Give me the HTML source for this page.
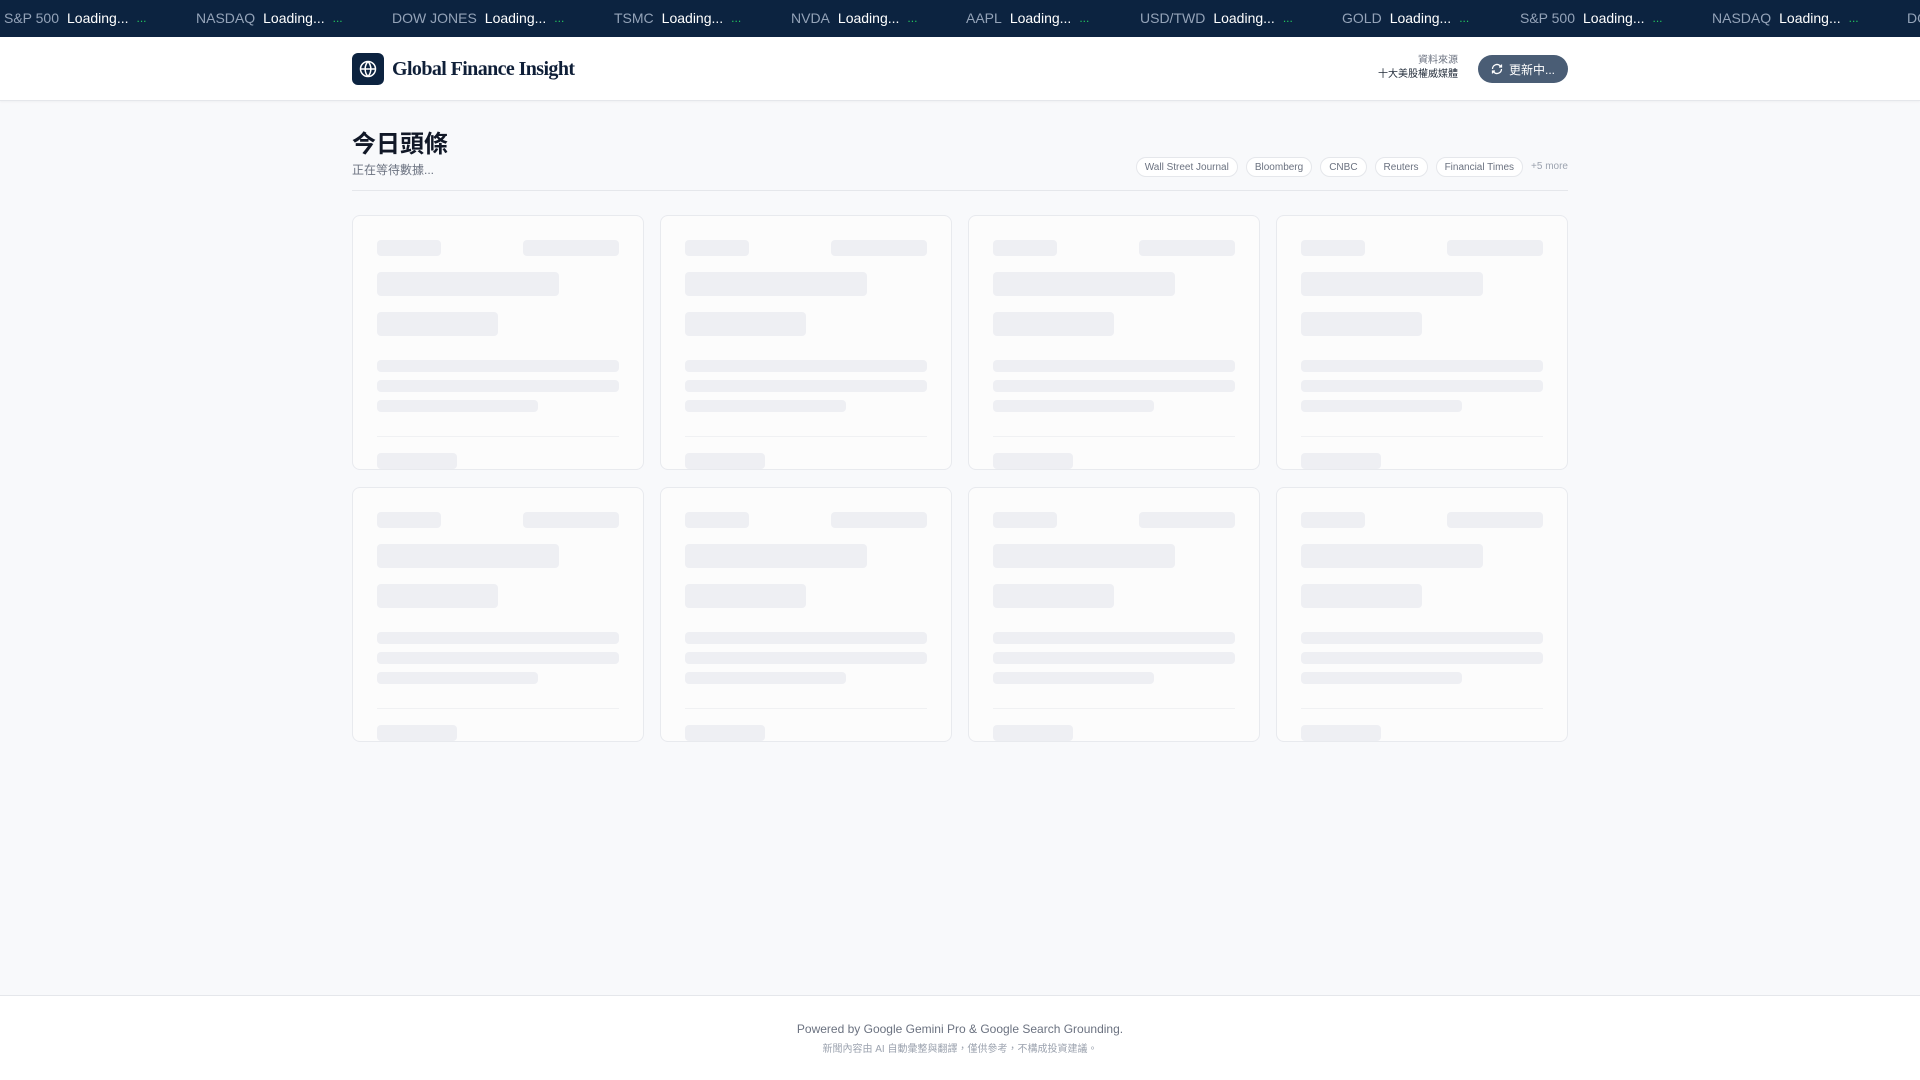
<!DOCTYPE html>
<html><head><meta charset="utf-8"><style>
*{box-sizing:border-box;margin:0;padding:0}
body{width:1920px;height:1080px;overflow:hidden;background:#f8f9fb;font-family:"Liberation Sans","Noto Sans CJK TC",sans-serif;position:relative}
.ticker{position:absolute;left:0;top:0;width:1920px;height:37px;background:#0c2340}
.ti{position:absolute;top:-1px;height:37px;display:flex;align-items:center;white-space:nowrap;font-size:14px}
.ti .l{color:#94a3b8;margin-right:8px}
.ti .v{color:#fff;margin-right:8px}
.ti .d{color:#22c55e;font-size:12px}
.header{position:absolute;left:0;top:37px;width:1920px;height:64px;background:#fff;border-bottom:1px solid #e5e7eb;box-shadow:0 1px 2px rgba(0,0,0,.04)}
.logo{position:absolute;left:352px;top:16px;width:32px;height:32px;background:#0c2340;border-radius:6px;display:flex;align-items:center;justify-content:center}
.title{position:absolute;left:392px;top:21px;font-family:"Liberation Serif",serif;font-weight:bold;font-size:20px;color:#0f1f38;letter-spacing:-0.6px}
.src{position:absolute;right:462px;top:17px;text-align:right;font-size:10px;line-height:14px}
.btn{position:absolute;left:1478px;top:18px;width:90px;height:28px;border-radius:14px;background:#4a5d75;color:#fff;font-size:12px;display:flex;align-items:center;justify-content:center;gap:6px}
h1{position:absolute;left:352px;top:124px;font-size:24px;font-weight:bold;color:#111827}
.sub{position:absolute;left:352px;top:161px;font-size:12px;color:#6b7280}
.chips{position:absolute;right:352px;top:157px;display:flex;gap:8px;align-items:center}
.chip{height:20px;padding:0 8px;border:1px solid #e5e7eb;border-radius:10px;background:#fff;font-size:10px;color:#6b7280;display:flex;align-items:center}
.more{font-size:10px;color:#9ca3af;margin-top:-2px}
.divider{position:absolute;left:352px;top:190px;width:1216px;height:1px;background:#e5e7eb}
.card{position:absolute;width:292px;height:255px;background:#fcfcfc;border:1px solid #e8eaee;border-radius:8px;overflow:hidden}
.s{position:absolute;background:#eeeff3;border-radius:4px}
.hr{position:absolute;left:24px;right:24px;top:220px;height:1px;background:#f0f1f3}
.footer{position:absolute;left:0;top:995px;width:1920px;height:85px;background:#fff;border-top:1px solid #e5e7eb;text-align:center}
</style></head><body>
<div class="ticker">
<div class="ti" style="left:4px"><span class="l">S&amp;P 500</span><span class="v">Loading...</span><span class="d">...</span></div>
<div class="ti" style="left:196px"><span class="l">NASDAQ</span><span class="v">Loading...</span><span class="d">...</span></div>
<div class="ti" style="left:392px"><span class="l">DOW JONES</span><span class="v">Loading...</span><span class="d">...</span></div>
<div class="ti" style="left:614px"><span class="l">TSMC</span><span class="v">Loading...</span><span class="d">...</span></div>
<div class="ti" style="left:791px"><span class="l">NVDA</span><span class="v">Loading...</span><span class="d">...</span></div>
<div class="ti" style="left:966px"><span class="l">AAPL</span><span class="v">Loading...</span><span class="d">...</span></div>
<div class="ti" style="left:1140px"><span class="l">USD/TWD</span><span class="v">Loading...</span><span class="d">...</span></div>
<div class="ti" style="left:1342px"><span class="l">GOLD</span><span class="v">Loading...</span><span class="d">...</span></div>
<div class="ti" style="left:1520px"><span class="l">S&amp;P 500</span><span class="v">Loading...</span><span class="d">...</span></div>
<div class="ti" style="left:1712px"><span class="l">NASDAQ</span><span class="v">Loading...</span><span class="d">...</span></div>
<div class="ti" style="left:1907px"><span class="l">DOW JONES</span></div>
</div>
<div class="header">
<div class="logo"><svg width="18" height="18" viewBox="0 0 24 24" fill="none" stroke="#fff" stroke-width="2"><circle cx="12" cy="12" r="10"/><path d="M2 12h20M12 2a15 15 0 0 1 0 20M12 2a15 15 0 0 0 0 20"/></svg></div>
<div class="title">Global Finance Insight</div>
<div class="src"><div style="color:#6b7280">資料來源</div><div style="color:#1f2937">十大美股權威媒體</div></div>
<div class="btn"><svg width="12" height="12" viewBox="0 0 24 24" fill="none" stroke="#fff" stroke-width="2.5"><path d="M21 12a9 9 0 0 1-15 6.7L3 16M3 12a9 9 0 0 1 15-6.7L21 8M21 3v5h-5M3 21v-5h5"/></svg>更新中...</div>
</div>
<h1>今日頭條</h1>
<div class="sub">正在等待數據...</div>
<div class="chips"><div class="chip">Wall Street Journal</div><div class="chip">Bloomberg</div><div class="chip">CNBC</div><div class="chip">Reuters</div><div class="chip">Financial Times</div><div class="more">+5 more</div></div>
<div class="divider"></div>
<div id="cards"></div>
<div class="footer">
<div style="font-size:12px;color:#6b7280;margin-top:26px">Powered by Google Gemini Pro &amp; Google Search Grounding.</div>
<div style="font-size:10px;color:#9ca3af;margin-top:4px">新聞內容由 AI 自動彙整與翻譯，僅供參考，不構成投資建議。</div>
</div>
<script>
var h='';var xs=[352,660,968,1276],ys=[215,487];
ys.forEach(function(y){xs.forEach(function(x){
h+='<div class="card" style="left:'+x+'px;top:'+y+'px">'+
'<div class="s" style="left:24px;top:24px;width:64px;height:16px"></div>'+
'<div class="s" style="right:24px;top:24px;width:96px;height:16px"></div>'+
'<div class="s" style="left:24px;top:56px;width:182px;height:24px"></div>'+
'<div class="s" style="left:24px;top:96px;width:121px;height:24px"></div>'+
'<div class="s" style="left:24px;right:24px;top:144px;height:12px"></div>'+
'<div class="s" style="left:24px;right:24px;top:164px;height:12px"></div>'+
'<div class="s" style="left:24px;top:184px;width:161px;height:12px"></div>'+
'<div class="hr"></div>'+
'<div class="s" style="left:24px;top:237px;width:80px;height:16px"></div></div>';});});
document.getElementById('cards').innerHTML=h;
</script>
</body></html>
